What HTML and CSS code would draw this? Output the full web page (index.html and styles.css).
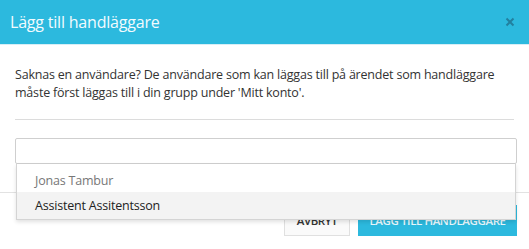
FILE: index.html
```html
<!DOCTYPE html>
<html lang="sv">
<head>
<meta charset="utf-8">
<link rel="stylesheet" href="styles.css">
</head>
<body>
<div class="modal">
  <div class="modal-header">
    <h4 class="modal-title">Lägg till handläggare</h4>
    <button class="close" type="button" aria-label="Stäng">
      <svg width="10" height="10" viewBox="0 0 10 10"><path d="M1.5 1.5 L8.5 8.5 M8.5 1.5 L1.5 8.5" stroke="#22809f" stroke-width="2" fill="none"/></svg>
    </button>
  </div>
  <div class="modal-body">
    <p class="info">Saknas en användare? De användare som kan läggas till på ärendet som handläggare måste först läggas till i din grupp under 'Mitt konto'.</p>
    <hr class="sep">
    <div class="combo">
      <input class="combo-input" type="text">
      <ul class="dropdown">
        <li class="item muted">Jonas Tambur</li>
        <li class="item active">Assistent Assitentsson</li>
      </ul>
    </div>
  </div>
  <div class="modal-footer">
    <button class="btn btn-default" type="button">Avbryt</button>
    <button class="btn btn-primary" type="button">Lägg till handläggare</button>
  </div>
</div>
</body>
</html>
```
FILE: styles.css
```css
* { box-sizing: border-box; }
html, body { margin: 0; padding: 0; background: #fff; }
body { font-family: "Open Sans", "Noto Sans", sans-serif; color: #333; }

.modal { width: 529px; }

.modal-header {
  height: 45px;
  background: #2cb9de;
  border-bottom: 1px solid #d6eef6;
  display: flex;
  align-items: center;
  justify-content: space-between;
  padding: 0 14px 0 10px;
}
.modal-title {
  margin: 0;
  font-weight: 400;
  font-size: 16px;
  color: #f2fbfe;
  letter-spacing: -0.2px;
}
.close {
  border: 0;
  background: none;
  padding: 0;
  display: flex;
  width: 10px;
  height: 10px;
}

.modal-body { padding: 21px 15px 28px 15px; }
.info {
  margin: 0;
  font-size: 12.5px;
  line-height: 18px;
  letter-spacing: -0.2px;
}
.sep {
  margin: 17px 0 18px;
  border: 0;
  border-top: 1px solid #dcdcdc;
}
.combo { position: relative; }
.combo-input {
  display: block;
  width: 502px;
  height: 26px;
  margin: 0;
  border: 1px solid #cfcfcf;
  border-radius: 2px;
  font: inherit;
}
.dropdown {
  position: absolute;
  top: 26px;
  left: 1px;
  width: 500px;
  margin: 0;
  padding: 0;
  list-style: none;
  background: #fff;
  border: 1px solid #d4d4d4;
  border-top: 0;
  box-shadow: 0 2px 4px rgba(0,0,0,0.12);
  z-index: 2;
}
.item {
  height: 27px;
  padding: 0 0 0 18px;
  font-size: 12.5px;
  letter-spacing: -0.2px;
  display: flex;
  align-items: center;
}
.item.muted { color: #777; padding-top: 4px; height: 28px; }
.item.active { background: #f3f3f3; color: #222; }

.modal-footer {
  border-top: 1px solid #e2e2e2;
  padding: 12px 12px 14px;
  display: flex;
  justify-content: flex-end;
  gap: 8px;
}
.btn {
  height: 31px;
  border-radius: 0;
  font-family: inherit;
  font-size: 11.5px;
  font-weight: 600;
  text-transform: uppercase;
  letter-spacing: -0.4px;
  padding: 0 4px;
  white-space: nowrap;
  cursor: pointer;
}
.btn-default {
  background: #fafafa;
  border: 1px solid #e0e0e0;
  color: #333;
  width: 66px;
}
.btn-primary {
  background: #2cb9de;
  border: 1px solid #2cb9de;
  color: #e9f8fd;
  width: 159px;
}
```
